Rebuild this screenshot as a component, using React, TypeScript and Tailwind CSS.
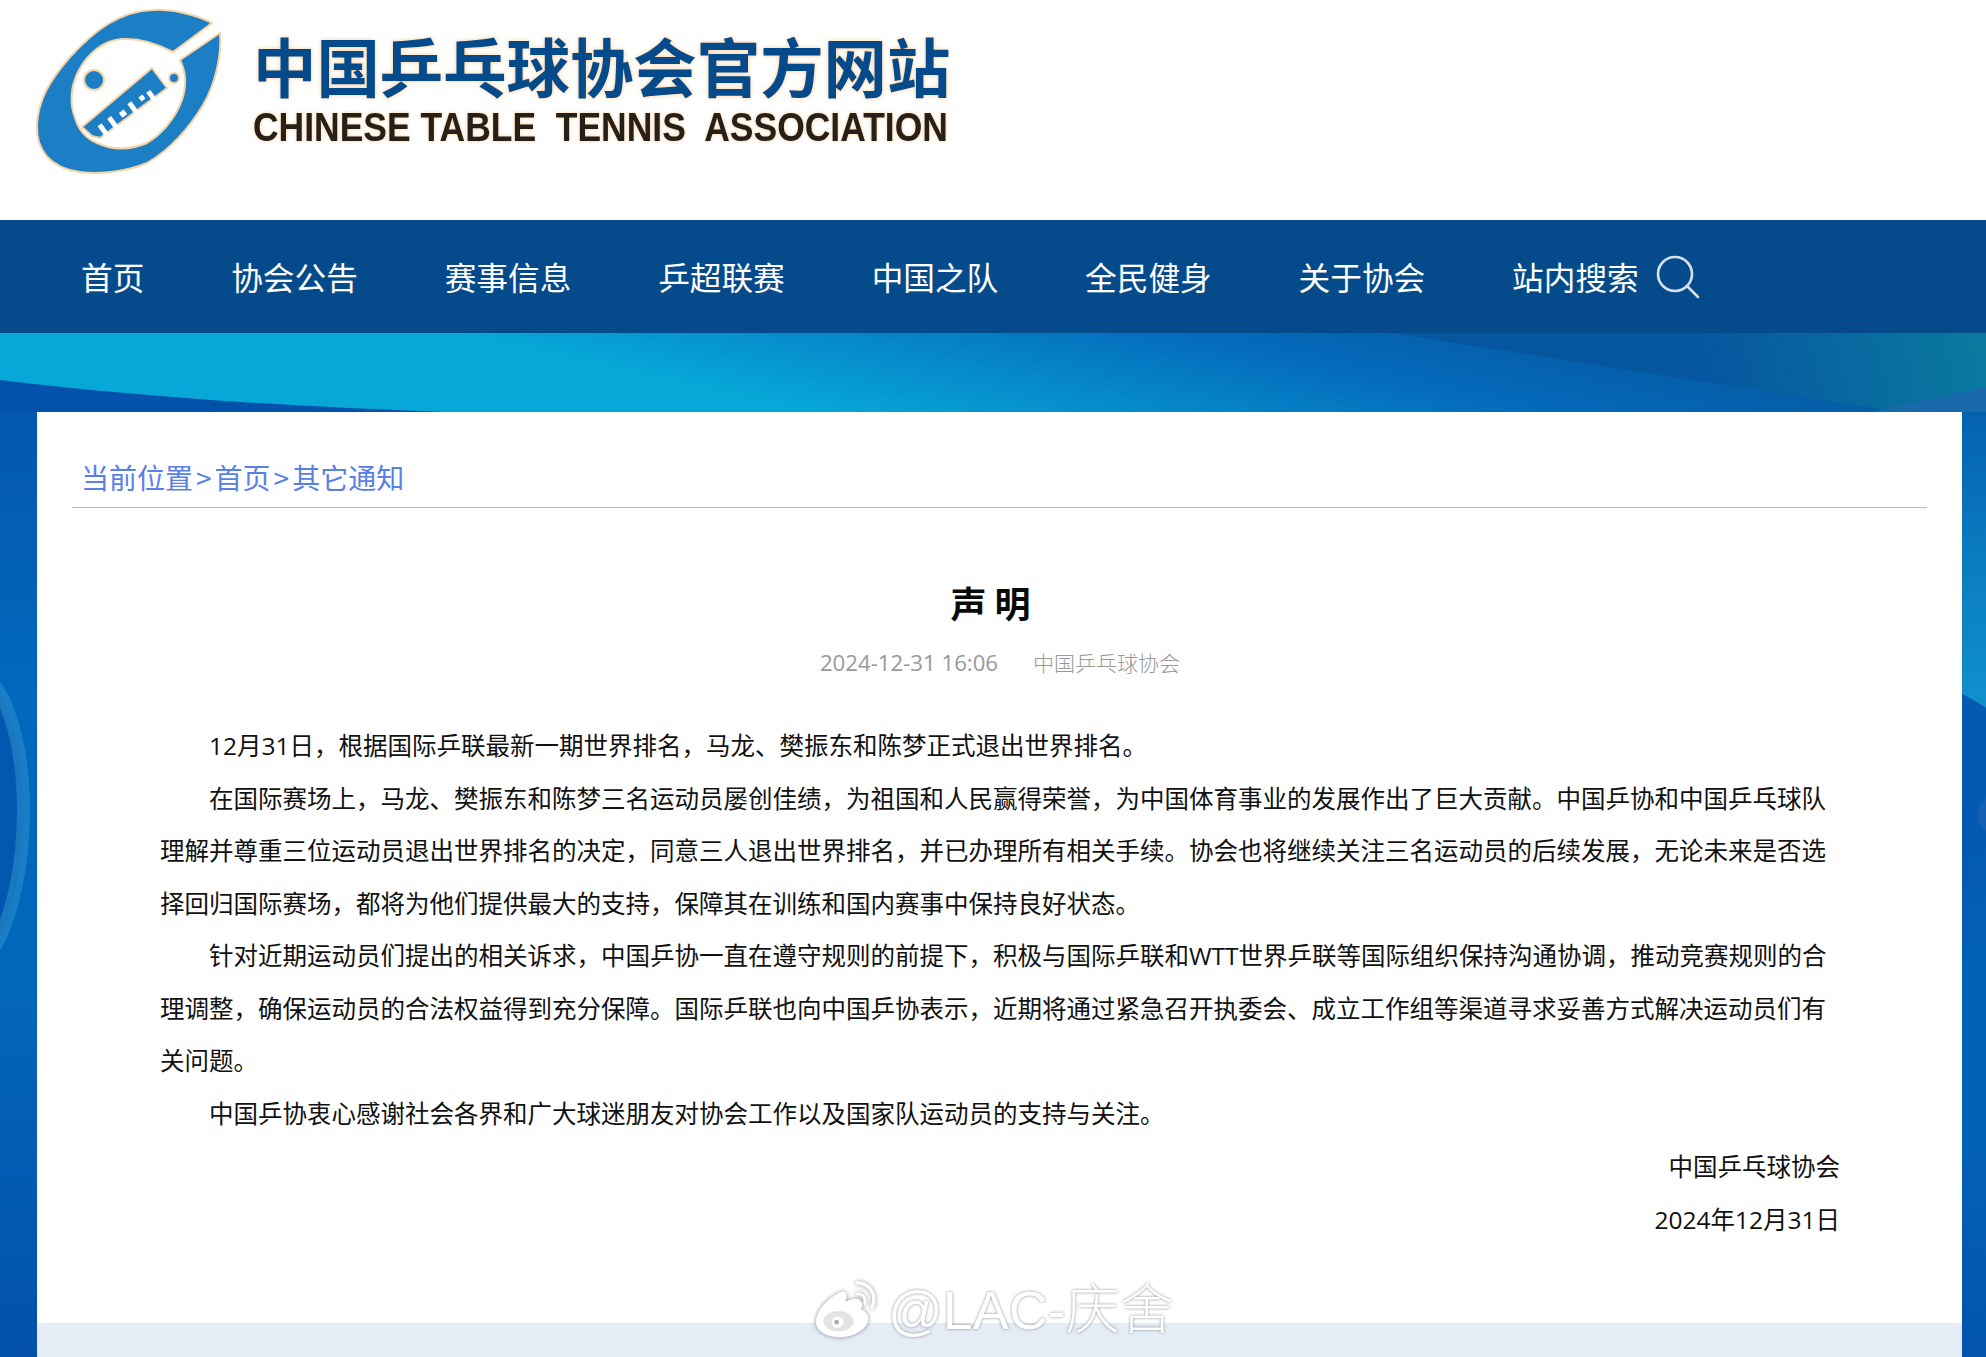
import React from "react";

const nav = ["首页", "协会公告", "赛事信息", "乒超联赛", "中国之队", "全民健身", "关于协会"];
const font = { fontFamily: '"Noto Sans CJK SC", "Noto Sans", sans-serif' };

function Logo() {
  return (
    <svg width="200" height="175" viewBox="30 5 200 175" className="shrink-0">
      <g fill="#1c7fc6" stroke="#f9d3a3" strokeWidth="2" strokeLinejoin="round">
        <path d="M212 23C195 14 170 9 153 10C120 11 95 30 70 57C50 80 38 100 37 125C36 150 50 168 80 172C105 175 130 170 147 163C170 150 190 127 203 105C215 85 222 55 220 33L180 60C186 72 187 85 182 100C175 120 160 135 147 143C130 150 112 150 97 143C85 138 78 128 75 118C70 105 70 88 78 72C88 52 105 40 122 39C140 38 158 44 173 52Z" />
        <circle cx="94" cy="80" r="10" />
        <circle cx="174" cy="78" r="5" />
        <path d="M82 127L152 68L167 88L100 138L92 136Z" />
      </g>
      <g fill="#ffffff" transform="translate(100 138) rotate(-36.3)">
        <rect x="5" y="-11" width="5" height="13" />
        <rect x="17" y="-11" width="5" height="13" />
        <rect x="30" y="-9" width="6" height="6" />
        <rect x="42" y="-11" width="5" height="13" />
        <rect x="55" y="-10" width="5" height="5" />
        <rect x="64" y="-9" width="5" height="11" />
      </g>
    </svg>
  );
}

function Background() {
  return (
    <svg className="absolute inset-0 w-full h-full" viewBox="0 0 1986 1024" preserveAspectRatio="none">
      <defs>
        <linearGradient id="teal" gradientUnits="userSpaceOnUse" x1="1164" y1="161" x2="1222" y2="-97">
          <stop offset="0" stopColor="#07a8d8" />
          <stop offset="0.62" stopColor="#046abb" />
          <stop offset="1" stopColor="#05589f" />
        </linearGradient>
        <linearGradient id="side" x1="0" y1="0" x2="0" y2="1">
          <stop offset="0" stopColor="#0457ae" />
          <stop offset="0.3" stopColor="#0068bd" />
          <stop offset="0.62" stopColor="#0266ba" />
          <stop offset="1" stopColor="#0250aa" />
        </linearGradient>
        <linearGradient id="corner" gradientUnits="userSpaceOnUse" x1="1986" y1="0" x2="1700" y2="70">
          <stop offset="0" stopColor="#0a7a9f" />
          <stop offset="1" stopColor="#05559f" />
        </linearGradient>
        <linearGradient id="rightstrip" x1="0" y1="0" x2="0" y2="1">
          <stop offset="0" stopColor="#0562ae" />
          <stop offset="0.5" stopColor="#0a7cc0" />
          <stop offset="1" stopColor="#1190cc" />
        </linearGradient>
      </defs>
      <rect width="1986" height="1024" fill="url(#side)" />
      <rect width="1986" height="79" fill="url(#teal)" />
      <path d="M1392 0H1986V79H1899Z" fill="url(#corner)" />
      <path d="M1873 79L1986 54V79Z" fill="#1b69ad" />
      <path d="M0 47C150 65 300 74 443 79H0Z" fill="#0251ab" />
      <path d="M0 79H37V1024H0Z" fill="url(#side)" />
      <path d="M-8 349C34 400 34 550 -8 619Z" fill="#0258af" stroke="#2a8ecb" strokeWidth="13" strokeOpacity="0.6" />
      <path d="M1962 79H1986V375C1975 368 1968 364 1962 361Z" fill="url(#rightstrip)" />
      <path d="M1962 361C1968 364 1975 368 1986 375V1024H1962Z" fill="#0459b0" />
      <path d="M1962 480H1986V1024H1962Z" fill="url(#side)" opacity="0.6" />
      <circle cx="2000" cy="482" r="22" fill="#1560b5" />
    </svg>
  );
}

export default function App() {
  return (
    <div className="w-[1986px] h-[1357px] overflow-hidden bg-white relative" style={font}>
      <header className="h-[220px] flex items-start pl-[30px] pt-[5px]">
        <Logo />
        <div className="ml-[23px] pt-[21px] flex flex-col">
          <div className="text-[63.4px] leading-[76px] font-bold text-[#054b8b] whitespace-nowrap [text-shadow:0_0_4px_#f9c78f]">中国乒乓球协会官方网站</div>
          <div className="text-[41px] leading-[44px] font-bold mt-[3px] text-[#262018] whitespace-pre origin-left scale-x-[0.865] [text-shadow:0_0_4px_#f9c78f]" style={{ fontFamily: '"Liberation Sans", sans-serif' }}>CHINESE TABLE  TENNIS  ASSOCIATION</div>
        </div>
      </header>

      <nav className="h-[113px] bg-[#054b8b] flex items-center pl-[81px] relative z-10">
        {nav.map((n) => (
          <span key={n} className="text-[31.66px] text-white mr-[86.85px] whitespace-nowrap leading-none">{n}</span>
        ))}
        <span className="text-[31.66px] text-white whitespace-nowrap leading-none">站内搜索</span>
        <svg width="44" height="44" viewBox="0 0 44 44" className="ml-[17px]" fill="none" stroke="#d5e0ea" strokeWidth="2.6">
          <circle cx="19" cy="19" r="17" />
          <path d="M31 31L42 42" strokeLinecap="round" />
        </svg>
      </nav>

      <main className="relative h-[1024px] pt-[79px]">
        <Background />
        <div className="relative ml-[37px] w-[1925px] h-[945px] bg-white flex flex-col">
          <div className="flex-1 px-[35px]">
            <div className="h-[96px] border-b border-[#b9b9b9] pl-[9px] pt-[45px] text-[28px] leading-[40px] text-[#5a80e8] whitespace-nowrap font-normal flex">
              <span>当前位置</span>
              <span className="mx-[3px]">&gt;</span>
              <span>首页</span>
              <span className="mx-[3px]">&gt;</span>
              <span>其它通知</span>
            </div>
            <div className="mx-[88px]">
              <h1 className="mt-[71px] pr-[18px] text-center text-[36px] leading-[46px] font-bold text-[#0a0a0a]">声 明</h1>
              <div className="mt-[22px] flex justify-center items-center text-[#999] h-[32px] pl-[1px]">
                <span className="text-[22.2px]" style={{ fontFamily: '"Open Sans", "Noto Sans", sans-serif' }}>2024-12-31 16:06</span>
                <span className="text-[21px] ml-[35px] font-light">中国乒乓球协会</span>
              </div>
              <div className="mt-[41px] text-[24.5px] leading-[52.55px] text-[#111] w-[1680px]" style={{ fontFamily: '"Open Sans", "Noto Sans CJK SC", sans-serif' }}>
                <p className="indent-[49px]">12月31日，根据国际乒联最新一期世界排名，马龙、樊振东和陈梦正式退出世界排名。</p>
                <p className="indent-[49px]">在国际赛场上，马龙、樊振东和陈梦三名运动员屡创佳绩，为祖国和人民赢得荣誉，为中国体育事业的发展作出了巨大贡献。中国乒协和中国乒乓球队理解并尊重三位运动员退出世界排名的决定，同意三人退出世界排名，并已办理所有相关手续。协会也将继续关注三名运动员的后续发展，无论未来是否选择回归国际赛场，都将为他们提供最大的支持，保障其在训练和国内赛事中保持良好状态。</p>
                <p className="indent-[49px]">针对近期运动员们提出的相关诉求，中国乒协一直在遵守规则的前提下，积极与国际乒联和WTT世界乒联等国际组织保持沟通协调，推动竞赛规则的合理调整，确保运动员的合法权益得到充分保障。国际乒联也向中国乒协表示，近期将通过紧急召开执委会、成立工作组等渠道寻求妥善方式解决运动员们有关问题。</p>
                <p className="indent-[49px]">中国乒协衷心感谢社会各界和广大球迷朋友对协会工作以及国家队运动员的支持与关注。</p>
                <p className="text-right mt-[1px]">中国乒乓球协会</p>
                <p className="text-right">2024年12月31日</p>
              </div>
            </div>
          </div>
          <div className="h-[34px] bg-[#e4ecf6]" />
        </div>
      </main>

      <div className="absolute left-[812px] top-[1280px] flex items-center text-white [text-shadow:0_0_3px_rgba(90,90,90,0.7)]">
        <svg width="68" height="58" viewBox="0 0 68 62" className="drop-shadow-[0_0_2px_rgba(90,90,90,0.7)]">
          <path fill="#fff" d="M28 12C14 18 2 32 2 44C2 54 14 60 28 60C44 60 58 50 58 40C58 34 52 31 50 30C54 24 50 18 42 19C38 20 34 22 34 21C36 14 34 9 28 12Z" />
          <ellipse cx="26" cy="43" rx="16" ry="11" fill="#e3e3e3" />
          <circle cx="25" cy="44" r="6" fill="#fff" />
          <circle cx="24" cy="44" r="2.5" fill="#aaa" />
          <path d="M46 14C51 13 56 18 54 24" fill="none" stroke="#fff" strokeWidth="3" strokeLinecap="round" />
          <path d="M46 2C58 2 68 14 62 28" fill="none" stroke="#fff" strokeWidth="3.5" strokeLinecap="round" />
        </svg>
        <span className="ml-[8px] text-[54px] leading-[60px] whitespace-nowrap font-light" style={{ fontFamily: '"Liberation Sans", "Noto Sans CJK SC", sans-serif' }}>@LAC-庆舍</span>
      </div>
    </div>
  );
}
